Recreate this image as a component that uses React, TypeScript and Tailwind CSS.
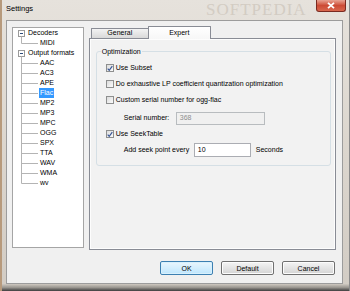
import React from 'react';

const font = { fontFamily: '"Liberation Sans", Arial, sans-serif' };

const formats = ['AAC', 'AC3', 'APE', 'Flac', 'MP2', 'MP3', 'MPC', 'OGG', 'SPX', 'TTA', 'WAV', 'WMA', 'wv'];

const ParentNode: React.FC<{ label: string }> = ({ label }) => (
    <div className="flex h-[10px] items-center">
        <svg width="15" height="10" className="shrink-0">
            <rect x="5.5" y="2.5" width="6" height="6" fill="#fff" stroke="#9a9a9a" />
            <line x1="7" y1="5.5" x2="10" y2="5.5" stroke="#2b4a7a" />
            <line x1="8.5" y1="8.5" x2="8.5" y2="10" stroke="#b4b4b4" />
        </svg>
        <span className="leading-[10px]">{label}</span>
    </div>
);

const ChildNode: React.FC<{ label: string; last?: boolean; selected?: boolean }> = ({ label, last, selected }) => (
    <div className="flex h-[10px] items-center">
        <svg width="26" height="10" className="shrink-0">
            <line x1="8.5" y1="0" x2="8.5" y2={last ? 5.5 : 10} stroke="#b4b4b4" />
            <line x1="8.5" y1="5.5" x2="25" y2="5.5" stroke="#b4b4b4" />
        </svg>
        <span
            className={
                selected
                    ? 'h-[10px] px-[1px] leading-[10px] bg-[#3399ff] text-white'
                    : 'h-[10px] px-[1px] leading-[10px]'
            }
        >
            {label}
        </span>
    </div>
);

const CheckBox: React.FC<{ checked?: boolean; label: string }> = ({ checked, label }) => (
    <div className="flex items-center gap-[2px]">
        <div className="w-[8px] h-[8px] border border-[#8e8f8f] bg-gradient-to-br from-[#dcdcdc] to-[#fbfbfb] flex items-center justify-center">
            {checked && (
                <svg width="7" height="7" viewBox="0 0 7 7">
                    <path d="M0.8 3.6 L2.6 5.6 L6.2 0.8" fill="none" stroke="#3a5795" strokeWidth="1.4" />
                </svg>
            )}
        </div>
        <span>{label}</span>
    </div>
);

const Button: React.FC<{ label: string; primary?: boolean }> = ({ label, primary }) => (
    <button
        className={
            primary
                ? 'w-[53px] h-[14px] rounded-[2px] border border-[#3c7fb1] bg-gradient-to-b from-[#eaf6fd] to-[#bee6fd] shadow-[inset_0_0_0_1px_#d8f0fc] text-[7px] leading-none text-black'
                : 'w-[53px] h-[14px] rounded-[2px] border border-[#707070] bg-gradient-to-b from-[#f4f4f4] to-[#d4d4d4] shadow-[inset_0_0_0_1px_#fcfcfc] text-[7px] leading-none text-black'
        }
    >
        {label}
    </button>
);

const App: React.FC = () => {
    return (
        <div className="w-[350px] h-[291px] overflow-hidden relative" style={font}>
            <div className="w-[350px] h-[291px] flex flex-col bg-gradient-to-b from-[#e6e2dc] via-[#dcd6ce] to-[#d2ccc4] border-l-[2px] border-l-[#b79a7c] border-r border-r-[#8a8a8a]">
                {/* Title bar */}
                <div className="h-[20px] flex items-start justify-between">
                    <span className="pl-[4px] pt-[4px] text-[7.5px] leading-[10px] text-black">Settings</span>
                    <div className="mr-[3px] w-[30px] h-[12px] rounded-b-[3px] border border-t-0 border-[#7a2a20] bg-gradient-to-b from-[#e8a393] via-[#cc4b35] to-[#d9674e] flex items-center justify-center">
                        <svg width="8" height="7" viewBox="0 0 8 7">
                            <path d="M1 0.8 L7 6.2 M7 0.8 L1 6.2" stroke="#fff" strokeWidth="1.8" />
                        </svg>
                    </div>
                </div>

                {/* Client area */}
                <div className="ml-[4px] w-[337px] h-[264px] border border-[#9c9c9c] bg-[#f0f0f0] pt-[5px] pl-[5px] pr-[6px] flex flex-col text-[7px] text-black">
                    <div className="flex gap-[5px]">
                        {/* Tree */}
                        <div className="mt-[1px] w-[72px] h-[221px] border border-[#a5a5a5] bg-white">
                            <ParentNode label="Decoders" />
                            <ChildNode label="MIDI" last />
                            <ParentNode label="Output formats" />
                            {formats.map((f, i) => (
                                <ChildNode key={f} label={f} last={i === formats.length - 1} selected={f === 'Flac'} />
                            ))}
                        </div>

                        {/* Tabs */}
                        <div className="w-[248px] flex flex-col">
                            <div className="h-[12px] flex items-end pl-[2px] relative z-10">
                                <div className="w-[58px] h-[10px] border border-b-0 border-[#898c95] rounded-t-[1px] bg-gradient-to-b from-[#f3f3f3] to-[#d9d9d9] flex items-center justify-center">
                                    General
                                </div>
                                <div className="-ml-[1px] -mb-[1px] w-[63px] h-[13px] border border-b-0 border-[#898c95] rounded-t-[1px] bg-gradient-to-b from-white to-[#f7f7f7] flex items-center justify-center">
                                    Expert
                                </div>
                            </div>
                            <div className="h-[212px] border border-[#898c95] bg-[#f2f2f2] shadow-[inset_0_0_0_1px_#fdfdfd] pl-[6px] pt-[12px]">
                                {/* Group box */}
                                <div className="relative w-[235px] h-[115px] border border-[#d5dfe5] rounded-[3px] pt-[8px] pl-[9px] flex flex-col">
                                    <span className="absolute -top-[5px] left-[4px] px-[1px] bg-[#f2f2f2] leading-[9px]">Optimization</span>
                                    <div className="h-[16px] flex items-center">
                                        <CheckBox checked label="Use Subset" />
                                    </div>
                                    <div className="h-[16px] flex items-center">
                                        <CheckBox label="Do exhaustive LP coefficient quantization optimization" />
                                    </div>
                                    <div className="h-[16px] flex items-center">
                                        <CheckBox label="Custom serial number for ogg-flac" />
                                    </div>
                                    <div className="h-[20px] flex items-center pl-[18px]">
                                        <span className="w-[52px]">Serial number:</span>
                                        <div className="w-[89px] h-[13px] border border-[#b8bcbf] bg-[#f0f0f0] pl-[3px] flex items-center text-[#8d8d8d]">
                                            368
                                        </div>
                                    </div>
                                    <div className="h-[12px] flex items-center">
                                        <CheckBox checked label="Use SeekTable" />
                                    </div>
                                    <div className="h-[20px] flex items-center pl-[18px]">
                                        <span className="w-[70px]">Add seek point every</span>
                                        <div className="w-[57px] h-[14px] border border-[#abadb3] bg-white pl-[3px] flex items-center">10</div>
                                        <span className="ml-[5px]">Seconds</span>
                                    </div>
                                </div>
                            </div>
                        </div>
                    </div>

                    {/* Buttons */}
                    <div className="mt-[11px] flex justify-end gap-[8px] pr-[1px]">
                        <Button label="OK" primary />
                        <Button label="Default" />
                        <Button label="Cancel" />
                    </div>
                </div>

                {/* Bottom frame */}
                <div className="flex-1 bg-gradient-to-b from-[#cfc9c1] via-[#9a9690] to-[#3e3e3e]" />
            </div>

            {/* Softpedia watermark */}
            <span className="absolute left-[206px] top-[1px] text-[17px] leading-[18px] tracking-[1px] text-[#b8ada0] opacity-40 pointer-events-none" style={{ fontFamily: '"Liberation Serif", serif' }}>
                SOFTPEDIA
            </span>
        </div>
    );
};

export default App;
